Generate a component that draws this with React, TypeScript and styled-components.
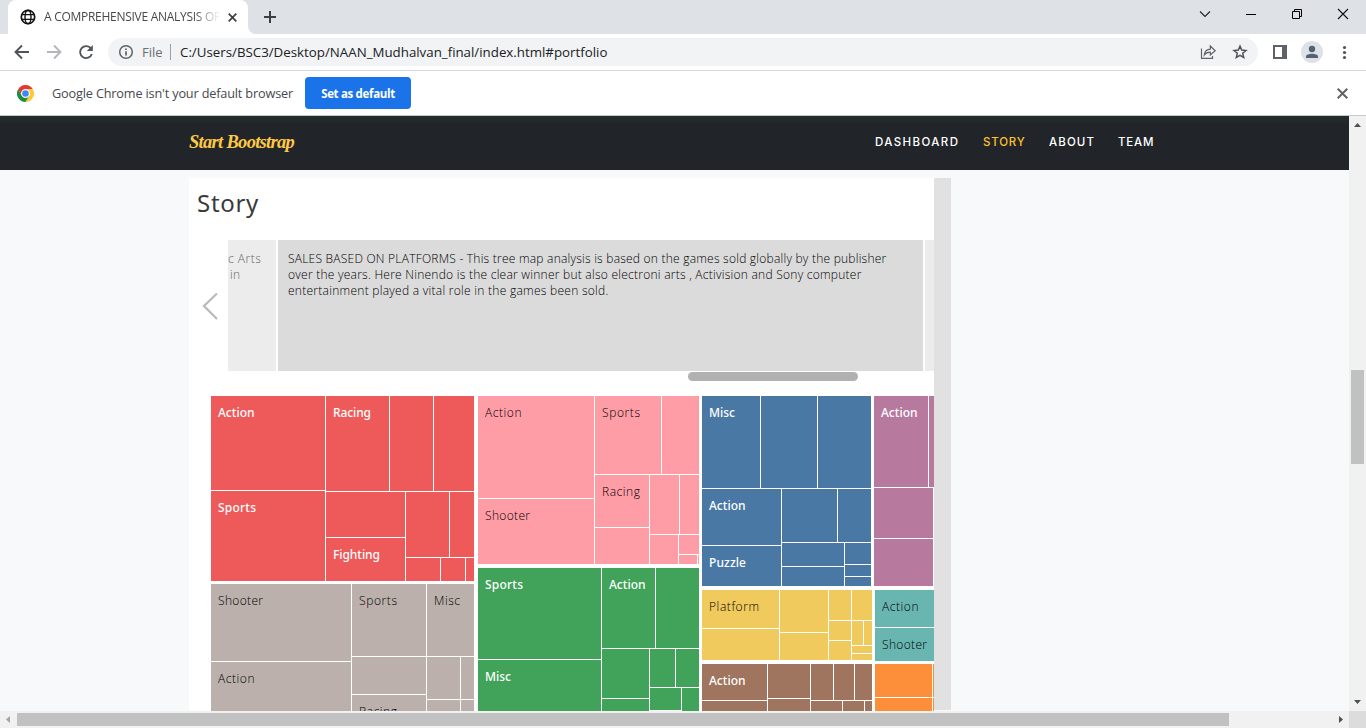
import React from "react";
import styled, { createGlobalStyle } from "styled-components";

const GlobalStyle = createGlobalStyle`
  * { box-sizing: border-box; }
  html, body { margin: 0; padding: 0; overflow: hidden; }
  body { font-family: "Open Sans", "Noto Sans", sans-serif; background: #fff; }
  svg { display: block; flex: none; }
`;

const Window = styled.div`
  width: 1366px;
  height: 728px;
  display: flex;
  flex-direction: column;
  overflow: hidden;
`;

/* ---------- browser chrome ---------- */

const TabStrip = styled.div`
  height: 34px;
  flex: none;
  display: flex;
  justify-content: space-between;
  background: #dee1e6;
`;

const TabArea = styled.div`
  display: flex;
`;

const Tab = styled.div`
  display: flex;
  align-items: center;
  width: 240px;
  height: 34px;
  margin-left: 8px;
  padding: 0 11px 0 12px;
  border-radius: 8px 8px 0 0;
  background: #fff;
`;

const TabFoot = styled.svg`
  align-self: flex-end;
`;

const TabTitle = styled.div`
  width: 176px;
  flex: none;
  margin-left: 8px;
  margin-right: 7.5px;
  overflow: hidden;
  white-space: nowrap;
  font-size: 12px;
  letter-spacing: -0.28px;
  line-height: 18px;
  color: #45494d;
  mask-image: linear-gradient(to right, #000 150px, transparent 176px);
`;

const NewTab = styled.div`
  display: flex;
  align-items: center;
  padding-left: 8px;
`;

const WindowButtons = styled.div`
  display: flex;
  padding: 8px 17px 0 0;
  gap: 34px;
`;

const Toolbar = styled.div`
  height: 37px;
  flex: none;
  display: flex;
  align-items: center;
  padding: 0 12px 1px 13px;
  background: #fff;
  border-bottom: 1px solid #d6d8db;
`;

const NavButtons = styled.div`
  display: flex;
  flex: none;
  gap: 14px;
  width: 95px;
`;

const AddressBar = styled.div`
  width: 1150px;
  height: 28px;
  flex: none;
  display: flex;
  align-items: center;
  padding: 0 9px;
  border-radius: 14px;
  background: #f1f3f4;
`;

const Scheme = styled.span`
  width: 28px;
  margin-left: 7px;
  font-size: 13px;
  line-height: 18px;
  color: #6b6f74;
`;

const Divider = styled.span`
  width: 1px;
  height: 16px;
  background: #9aa0a6;
`;

const Address = styled.span`
  flex: 1;
  margin-left: 9px;
  font-size: 13.3px;
  line-height: 18px;
  color: #202124;
`;

const AddressActions = styled.div`
  display: flex;
  gap: 14px;
`;

const BarActions = styled.div`
  display: flex;
  align-items: center;
  padding-left: 14px;
  gap: 13px;
`;

const Avatar = styled.div`
  width: 22px;
  height: 22px;
  border-radius: 50%;
  background: #dee1e6;
`;

const InfoBar = styled.div`
  height: 45px;
  flex: none;
  display: flex;
  align-items: center;
  padding: 0 18px 0 17px;
  background: #fff;
  border-bottom: 1px solid #c5cac9;
`;

const InfoText = styled.span`
  width: 241px;
  margin-left: 18px;
  font-size: 12.7px;
  letter-spacing: -0.16px;
  white-space: nowrap;
  color: #45494d;
`;

const DefaultButton = styled.button`
  width: 106px;
  height: 32px;
  margin: 0 auto 0 12px;
  padding: 0;
  border: 0;
  border-radius: 4px;
  background: #1a73e8;
  color: #fff;
  font: 700 11.5px "Open Sans", sans-serif;
  letter-spacing: -0.33px;
`;

/* ---------- page ---------- */

const Viewport = styled.div`
  flex: 1;
  display: flex;
  min-height: 0;
`;

const Page = styled.div`
  width: 1349px;
  display: flex;
  flex-direction: column;
  background: #f8f9fa;
`;

const SiteNav = styled.nav`
  height: 54px;
  flex: none;
  display: flex;
  align-items: center;
  justify-content: space-between;
  padding: 0 195px 2px 189px;
  background: linear-gradient(#262c2c, #212529 9px);
`;

const Brand = styled.span`
  font: italic 700 18.5px/28px "Liberation Serif", serif;
  letter-spacing: -0.7px;
  color: #ffc845;
`;

const NavLinks = styled.div`
  display: flex;
  gap: 23px;
`;

const NavLink = styled.a<{ $width: number; $spacing: number; $active?: boolean }>`
  width: ${(p) => p.$width}px;
  font: 500 11.5px/16px Inter, sans-serif;
  letter-spacing: ${(p) => p.$spacing}px;
  white-space: nowrap;
  color: ${(p) => (p.$active ? "#ffc02e" : "#fff")};
`;

const Embed = styled.div`
  display: flex;
  width: 762px;
  height: 533px;
  margin: 8px 0 0 189px;
`;

const Story = styled.section`
  width: 745px;
  display: flex;
  flex-direction: column;
  overflow: hidden;
  background: #fff;
`;

const EmbedScroll = styled.div`
  width: 17px;
  height: 532px;
  background: #e1e1e1;
`;

const StoryTitle = styled.h1`
  height: 62px;
  margin: 0;
  padding: 8px 0 0 8px;
  font: 400 24px/34px "Noto Sans", sans-serif;
  letter-spacing: 0.7px;
  color: #3a3a3a;
`;

const Captions = styled.div`
  height: 131px;
  flex: none;
  display: flex;
  gap: 2px;
`;

const PrevButton = styled.div`
  width: 37px;
  display: flex;
  align-items: center;
  padding-left: 13px;
`;

const Caption = styled.div<{ $width: number; $current?: boolean }>`
  width: ${(p) => p.$width}px;
  flex: none;
  padding-top: 11px;
  padding-left: ${(p) => (p.$current ? 10 : 0)}px;
  overflow: hidden;
  font: 300 12px/16px "Open Sans", "Noto Sans", sans-serif;
  white-space: nowrap;
  background: ${(p) => (p.$current ? "#dbdbdb" : "#ececec")};
  color: ${(p) => (p.$current ? "#000" : "#666")};
`;

const CaptionLine = styled.div<{ $spacing: number; $indent?: number }>`
  letter-spacing: ${(p) => p.$spacing}px;
  padding-left: ${(p) => p.$indent ?? 0}px;
`;

const CaptionThumb = styled.div`
  width: 170px;
  height: 9px;
  flex: none;
  margin: 1px 0 15px 499px;
  border-radius: 5px;
  background: #b1b1b1;
`;

const ChartLabel = styled.text<{ $light?: boolean }>`
  font-family: ${(p) => (p.$light ? '"Noto Sans"' : '"Open Sans"')}, sans-serif;
  font-size: 12px;
  font-weight: ${(p) => (p.$light ? 500 : 300)};
  fill: ${(p) => (p.$light ? "#fff" : "#000")};
`;

const VScroll = styled.div`
  width: 17px;
  display: flex;
  flex-direction: column;
  align-items: center;
  padding: 7px 0;
  background: #f1f1f1;
`;

const VThumb = styled.div`
  width: 13px;
  height: 94px;
  margin-top: 243px;
  margin-bottom: auto;
  background: #c1c1c1;
`;

const BottomBar = styled.div`
  height: 17px;
  flex: none;
  display: flex;
  background: #f1f1f1;
`;

const HTrack = styled.div`
  width: 1349px;
  display: flex;
  align-items: center;
  padding: 0 6px;
`;

const HThumb = styled.div`
  width: 1212px;
  height: 13px;
  margin: 0 auto 0 7px;
  background: #c1c1c1;
`;

const Corner = styled.div`
  width: 17px;
  background: #dcdcdc;
`;

/* ---------- treemap data: left, top, right, bottom, label ---------- */

type Cell = [number, number, number, number, string?];
type Group = { fill: string; light?: boolean; cells: Cell[] };

const LABEL_WIDTH: Record<string, number> = {
  Action: 36.5, Sports: 38, Racing: 38, Fighting: 47, Shooter: 45,
  Misc: 26, Puzzle: 37, Platform: 50,
};

const groups: Group[] = [
  { fill: "#ee5a5a", light: true, cells: [
    [211, 396, 325, 490, "Action"], [211, 491, 325, 581, "Sports"],
    [326, 396, 389, 491, "Racing"], [390, 396, 433, 491], [434, 396, 474, 491],
    [326, 492, 405, 537], [326, 538, 405, 581, "Fighting"],
    [406, 492, 449, 557], [450, 492, 474, 557],
    [406, 558, 440, 581], [441, 558, 465, 581], [466, 558, 474, 581],
  ] },
  { fill: "#bbb0ac", cells: [
    [211, 584, 351, 661, "Shooter"], [211, 662, 351, 720, "Action"],
    [352, 584, 426, 656, "Sports"], [427, 584, 474, 656, "Misc"],
    [352, 657, 426, 694], [352, 695, 426, 720, "Racing"],
    [427, 657, 460, 699], [461, 657, 474, 699],
    [427, 700, 460, 720], [461, 700, 474, 720],
  ] },
  { fill: "#ff9da7", cells: [
    [478, 396, 594, 498, "Action"], [478, 499, 594, 564, "Shooter"],
    [595, 396, 661, 474, "Sports"], [662, 396, 699, 474],
    [595, 475, 649, 527, "Racing"], [595, 528, 649, 564],
    [650, 475, 679, 534], [680, 475, 699, 534],
    [650, 535, 678, 564], [679, 535, 699, 554],
    [679, 555, 697, 564], [698, 555, 699, 564],
  ] },
  { fill: "#41a25a", light: true, cells: [
    [478, 568, 601, 659, "Sports"], [478, 660, 601, 720, "Misc"],
    [602, 568, 655, 648, "Action"], [656, 568, 699, 648],
    [602, 649, 649, 698], [602, 699, 649, 720],
    [650, 649, 675, 687], [676, 649, 699, 687],
    [650, 688, 681, 710], [682, 688, 699, 720],
  ] },
  { fill: "#4978a5", light: true, cells: [
    [702, 396, 760, 488, "Misc"], [761, 396, 817, 488], [818, 396, 871, 488],
    [702, 489, 781, 545, "Action"], [702, 546, 781, 586, "Puzzle"],
    [782, 489, 837, 542], [838, 489, 871, 542],
    [782, 543, 844, 566], [782, 567, 844, 586],
    [845, 543, 871, 564], [845, 565, 871, 576], [845, 577, 871, 586],
  ] },
  { fill: "#b8799f", light: true, cells: [
    [874, 396, 928, 487, "Action"], [929, 396, 940, 487],
    [874, 488, 933, 538], [874, 539, 933, 586],
  ] },
  { fill: "#f0ca5c", cells: [
    [702, 590, 779, 628, "Platform"], [702, 629, 779, 660],
    [780, 590, 828, 632], [780, 633, 828, 660],
    [829, 590, 851, 620], [852, 590, 872, 620],
    [829, 621, 851, 640], [829, 641, 851, 660],
    [852, 621, 863, 645], [864, 621, 872, 645],
    [852, 646, 872, 653], [852, 654, 872, 660],
  ] },
  { fill: "#69b6b1", cells: [
    [875, 590, 940, 627, "Action"], [875, 628, 940, 661, "Shooter"],
  ] },
  { fill: "#a07560", light: true, cells: [
    [702, 664, 767, 700, "Action"], [702, 701, 767, 720],
    [768, 664, 810, 698], [768, 699, 810, 720],
    [811, 664, 833, 700], [834, 664, 854, 700], [855, 664, 872, 700],
    [811, 701, 842, 720], [843, 701, 864, 720], [865, 701, 872, 720],
  ] },
  { fill: "#fd8f3b", cells: [
    [875, 664, 932, 697], [875, 698, 932, 720],
    [933, 664, 940, 697], [933, 698, 940, 720],
  ] },
];

const Treemap = () => (
  <svg width="745" height="315" viewBox="189 396 745 315">
    {groups.map((g) => (
      <g key={g.fill}>
        {g.cells.map(([l, t, r, b, label]) => (
          <g key={`${l}-${t}`}>
            <rect x={l} y={t} width={r - l} height={b - t} fill={g.fill} />
            {label && (
              <ChartLabel $light={g.light} x={l + 7} y={t + 21} textLength={LABEL_WIDTH[label]}>
                {label}
              </ChartLabel>
            )}
          </g>
        ))}
      </g>
    ))}
  </svg>
);

/* ---------- icons ---------- */

const Globe = () => (
  <svg width="16" height="16" viewBox="0 0 16 16" fill="none" stroke="#111" strokeWidth="1.7">
    <circle cx="8" cy="8" r="6.7" />
    <ellipse cx="8" cy="8" rx="3" ry="6.7" strokeWidth="1.4" />
    <path d="M1.8 5.6h12.4M1.8 10.4h12.4" strokeWidth="1.4" />
  </svg>
);

const Cross = ({ size, color, weight }: { size: number; color: string; weight: number }) => (
  <svg width={size} height={size} viewBox={`0 0 ${size} ${size}`} stroke={color} strokeWidth={weight}>
    <path d={`M.7 .7L${size - 0.7} ${size - 0.7}M${size - 0.7} .7L.7 ${size - 0.7}`} />
  </svg>
);

const ChromeLogo = () => (
  <svg width="17" height="17" viewBox="0 0 48 48">
    <path d="M3.2 12A24 24 0 0 1 44.8 12H24A12 12 0 0 0 13.6 30Z" fill="#e33b2e" />
    <path d="M44.8 12A24 24 0 0 1 24 48L34.4 30A12 12 0 0 0 24 12Z" fill="#fcc934" />
    <path d="M24 48A24 24 0 0 1 3.2 12L13.6 30A12 12 0 0 0 34.4 30Z" fill="#1e8e3e" />
    <circle cx="24" cy="24" r="12" fill="#fff" />
    <circle cx="24" cy="24" r="9.3" fill="#4285f4" />
  </svg>
);

const Arrow = ({ dir }: { dir: "up" | "down" | "left" | "right" }) => {
  const paths = { up: "M0 4L3.5 0L7 4Z", down: "M0 0H7L3.5 4Z", left: "M4 0V7L0 3.5Z", right: "M0 0L4 3.5L0 7Z" };
  const vertical = dir === "up" || dir === "down";
  return (
    <svg width={vertical ? 7 : 4} height={vertical ? 4 : 7}>
      <path d={paths[dir]} fill={dir === "left" ? "#a3a3a3" : "#505050"} />
    </svg>
  );
};

export default function App() {
  return (
    <Window>
      <GlobalStyle />
      <TabStrip>
        <TabArea>
          <Tab>
            <Globe />
            <TabTitle>A COMPREHENSIVE ANALYSIS OF</TabTitle>
            <Cross size={9} color="#3c4043" weight={1.7} />
          </Tab>
          <TabFoot width="8" height="8"><path d="M0 0A8 8 0 0 0 8 8H0Z" fill="#fff" /></TabFoot>
          <NewTab>
            <svg width="12" height="12" stroke="#3c4043" strokeWidth="2"><path d="M6 0V12M0 6H12" /></svg>
          </NewTab>
        </TabArea>
        <WindowButtons>
          <svg width="12" height="12" fill="none" stroke="#222" strokeWidth="1.1"><path d="M1 3.5L6 8.5L11 3.5" /></svg>
          <svg width="12" height="12" shapeRendering="crispEdges"><rect x="1" y="6" width="10" height="1" fill="#000" /></svg>
          <svg width="12" height="12" fill="none" stroke="#000"><path d="M1.5 3.5h7v7h-7zM3.5 3.5v-2h7v7h-2" /></svg>
          <svg width="12" height="12" stroke="#111" strokeWidth="1.1"><path d="M1 1L11 11M11 1L1 11" /></svg>
        </WindowButtons>
      </TabStrip>

      <Toolbar>
        <NavButtons>
          <svg width="18" height="16" fill="none" stroke="#505357" strokeWidth="1.9"><path d="M16 8H3M9 1.5L2.5 8L9 14.5" /></svg>
          <svg width="18" height="16" fill="none" stroke="#b5b7ba" strokeWidth="1.9"><path d="M2 8H15M9 1.5L15.5 8L9 14.5" /></svg>
          <svg width="18" height="16" fill="none" stroke="#505357" strokeWidth="1.9">
            <path d="M14 4.6A6 6 0 1 0 14.8 10" />
            <path d="M15.8 1V7H9.8Z" fill="#505357" stroke="none" />
          </svg>
        </NavButtons>
        <AddressBar>
          <svg width="18" height="16" fill="none" stroke="#5f6368" strokeWidth="1.5">
            <circle cx="9" cy="8" r="6.3" /><path d="M9 7.2V11.5M9 4.5V6.1" strokeWidth="1.7" />
          </svg>
          <Scheme>File</Scheme>
          <Divider />
          <Address>C:/Users/BSC3/Desktop/NAAN_Mudhalvan_final/index.html#portfolio</Address>
          <AddressActions>
            <svg width="18" height="16" fill="none" stroke="#5f6368" strokeWidth="1.2">
              <path d="M2.5 4.5V14.4H13.5V12M5.3 11C5.7 7 8 5.2 11.3 5.1V2L16.2 6.7L11.3 11V8.2C8.7 8.2 6.7 9 5.3 11Z" />
            </svg>
            <svg width="18" height="16" viewBox="0 0 18 16" fill="none" stroke="#505357" strokeWidth="1.5">
              <path d="M9 2.1L10.7 6.1L15 6.5L11.7 9.3L12.7 13.5L9 11.3L5.3 13.5L6.3 9.3L3 6.5L7.3 6.1Z" />
            </svg>
          </AddressActions>
        </AddressBar>
        <BarActions>
          <svg width="16" height="14"><path d="M1 0H15V14H1ZM3 2V12H10V2Z" fill="#5f6368" fillRule="evenodd" /></svg>
          <Avatar>
            <svg width="22" height="22" fill="#536173"><circle cx="11" cy="8" r="3.2" /><path d="M5 17V15.5C5 11.7 17 11.7 17 15.5V17Z" /></svg>
          </Avatar>
          <svg width="18" height="16" fill="#505357">
            <circle cx="8.5" cy="3.5" r="1.6" /><circle cx="8.5" cy="8.5" r="1.6" /><circle cx="8.5" cy="13.5" r="1.6" />
          </svg>
        </BarActions>
      </Toolbar>

      <InfoBar>
        <ChromeLogo />
        <InfoText>Google Chrome isn't your default browser</InfoText>
        <DefaultButton>Set as default</DefaultButton>
        <Cross size={11} color="#5f6368" weight={2} />
      </InfoBar>

      <Viewport>
        <Page>
          <SiteNav>
            <Brand>Start Bootstrap</Brand>
            <NavLinks>
              <NavLink $width={85} $spacing={1.4}>DASHBOARD</NavLink>
              <NavLink $width={43} $spacing={0.8} $active>STORY</NavLink>
              <NavLink $width={46} $spacing={1.1}>ABOUT</NavLink>
              <NavLink $width={36} $spacing={0.8}>TEAM</NavLink>
            </NavLinks>
          </SiteNav>
          <Embed>
            <Story>
              <StoryTitle>Story</StoryTitle>
              <Captions>
                <PrevButton>
                  <svg width="17" height="28" fill="none" stroke="#b9b9b9" strokeWidth="2.2"><path d="M15 1.5L2 14L15 27" /></svg>
                </PrevButton>
                <Caption $width={48}>
                  <CaptionLine $spacing={0.5}>c Arts</CaptionLine>
                  <CaptionLine $spacing={0.3} $indent={2}>in</CaptionLine>
                </Caption>
                <Caption $width={645} $current>
                  <CaptionLine $spacing={0.23}>SALES BASED ON PLATFORMS - This tree map analysis is based on the games sold globally by the publisher</CaptionLine>
                  <CaptionLine $spacing={0.25}>over the years. Here Ninendo is the clear winner but also electroni arts , Activision and Sony computer</CaptionLine>
                  <CaptionLine $spacing={0.27}>entertainment played a vital role in the games been sold.</CaptionLine>
                </Caption>
                <Caption $width={9} />
              </Captions>
              <CaptionThumb />
              <Treemap />
            </Story>
            <EmbedScroll />
          </Embed>
        </Page>
        <VScroll>
          <Arrow dir="up" />
          <VThumb />
          <Arrow dir="down" />
        </VScroll>
      </Viewport>

      <BottomBar>
        <HTrack>
          <Arrow dir="left" />
          <HThumb />
          <Arrow dir="right" />
        </HTrack>
        <Corner />
      </BottomBar>
    </Window>
  );
}
